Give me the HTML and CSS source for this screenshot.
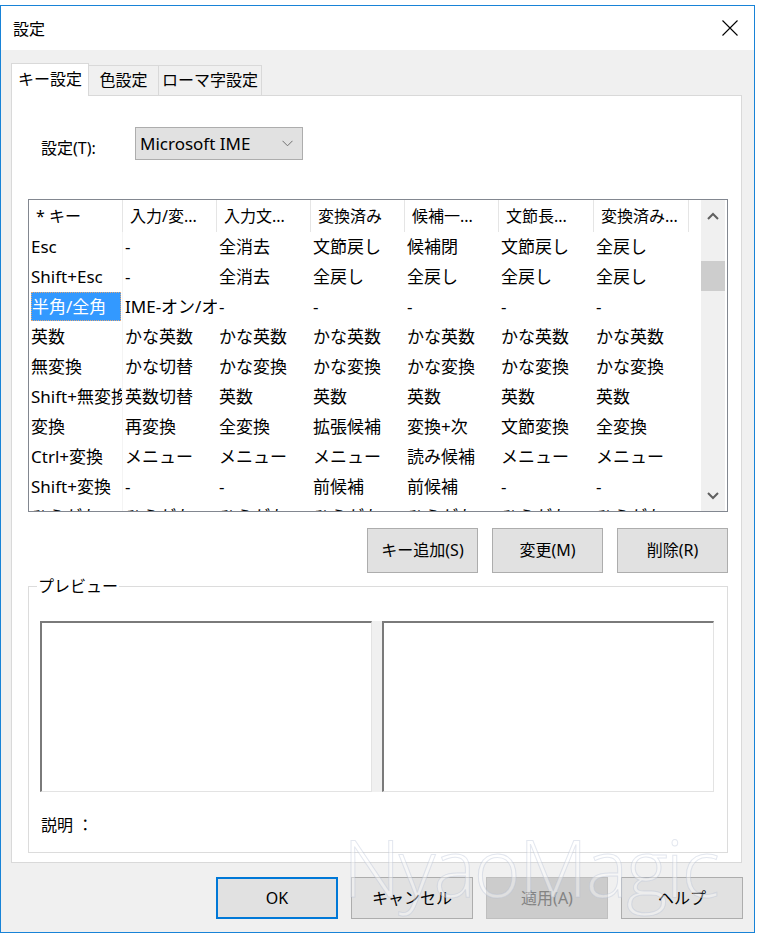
FILE: index.html
```html
<!DOCTYPE html>
<html>
<head>
    <meta charset="utf-8"/>
    <title>設定</title>
    <link rel="stylesheet" href="styles.css">
</head>
<body>
<div class="dialog">
    <div class="titlebar">
        <span class="title">設定</span>
        <svg class="close" width="16" height="16" viewBox="0 0 16 16"><path d="M0.5 0.5 L15.5 15.5 M15.5 0.5 L0.5 15.5" stroke="#000" stroke-width="1.1" fill="none"/></svg>
    </div>
    <div class="client">
        <div class="tabs">
            <div class="tab on">キー設定</div>
            <div class="tab t2">色設定</div>
            <div class="tab t3">ローマ字設定</div>
        </div>
        <div class="panel">
            <div class="setrow">
                <span class="setlabel">設定(T):</span>
                <div class="combo">
                    <span>Microsoft IME</span>
                    <svg width="11" height="7" viewBox="0 0 11 7"><path d="M0.5 0.8 L5.5 5.8 L10.5 0.8" stroke="#707070" stroke-width="1" fill="none"/></svg>
                </div>
            </div>

            <div class="list">
                <div class="grid">
                    <div class="hd">
                        <div class="h">* キー</div>
                        <div class="h">入力/変...</div>
                        <div class="h">入力文...</div>
                        <div class="h">変換済み</div>
                        <div class="h">候補一...</div>
                        <div class="h">文節長...</div>
                        <div class="h">変換済み...</div>
                    </div>
                    <div class="row"><div class="c">Esc</div><div class="c">-</div><div class="c">全消去</div><div class="c">文節戻し</div><div class="c">候補閉</div><div class="c">文節戻し</div><div class="c">全戻し</div></div>
                    <div class="row"><div class="c">Shift+Esc</div><div class="c">-</div><div class="c">全消去</div><div class="c">全戻し</div><div class="c">全戻し</div><div class="c">全戻し</div><div class="c">全戻し</div></div>
                    <div class="row"><div class="c sel"><span>半角/全角</span></div><div class="c">IME-オン/オフ</div><div class="c">-</div><div class="c">-</div><div class="c">-</div><div class="c">-</div><div class="c">-</div></div>
                    <div class="row"><div class="c">英数</div><div class="c">かな英数</div><div class="c">かな英数</div><div class="c">かな英数</div><div class="c">かな英数</div><div class="c">かな英数</div><div class="c">かな英数</div></div>
                    <div class="row"><div class="c">無変換</div><div class="c">かな切替</div><div class="c">かな変換</div><div class="c">かな変換</div><div class="c">かな変換</div><div class="c">かな変換</div><div class="c">かな変換</div></div>
                    <div class="row"><div class="c">Shift+無変換</div><div class="c">英数切替</div><div class="c">英数</div><div class="c">英数</div><div class="c">英数</div><div class="c">英数</div><div class="c">英数</div></div>
                    <div class="row"><div class="c">変換</div><div class="c">再変換</div><div class="c">全変換</div><div class="c">拡張候補</div><div class="c">変換+次</div><div class="c">文節変換</div><div class="c">全変換</div></div>
                    <div class="row"><div class="c">Ctrl+変換</div><div class="c">メニュー</div><div class="c">メニュー</div><div class="c">メニュー</div><div class="c">読み候補</div><div class="c">メニュー</div><div class="c">メニュー</div></div>
                    <div class="row"><div class="c">Shift+変換</div><div class="c">-</div><div class="c">-</div><div class="c">前候補</div><div class="c">前候補</div><div class="c">-</div><div class="c">-</div></div>
                    <div class="row"><div class="c">ひらがな</div><div class="c">ひらがな</div><div class="c">ひらがな</div><div class="c">ひらがな</div><div class="c">ひらがな</div><div class="c">ひらがな</div><div class="c">ひらがな</div></div>
                </div>
                <div class="vscroll">
                    <div class="arrow up"><svg width="12" height="8" viewBox="0 0 12 8"><path d="M1 7 L6 2 L11 7" stroke="#606060" stroke-width="2" fill="none"/></svg></div>
                    <div class="thumb"></div>
                    <div class="arrow down"><svg width="12" height="8" viewBox="0 0 12 8"><path d="M1 1 L6 6 L11 1" stroke="#606060" stroke-width="2" fill="none"/></svg></div>
                </div>
            </div>

            <div class="btnrow">
                <div class="btn">キー追加(S)</div>
                <div class="btn">変更(M)</div>
                <div class="btn">削除(R)</div>
            </div>

            <div class="group">
                <div class="gtitle">プレビュー</div>
                <div class="panes">
                    <div class="pane"></div>
                    <div class="split"></div>
                    <div class="pane"></div>
                </div>
                <div class="desc">説明 ：</div>
            </div>
        </div>

        <div class="footer">
            <div class="fbtn def">OK</div>
            <div class="fbtn">キャンセル</div>
            <div class="fbtn off">適用(A)</div>
            <div class="fbtn">ヘルプ</div>
        </div>
        <div class="mark">NyaoMagic</div>
    </div>
</div>
</body>
</html>
```

FILE: styles.css
```css
* {
    margin: 0;
    padding: 0;
    box-sizing: border-box;
}
body {
    font: 16px/20px "Noto Sans", "Noto Sans CJK JP", sans-serif;
    color: #000;
    background: #fff;
}
.dialog {
    width: 755px;
    height: 928px;
    margin-top: 5px;
    border: 1px solid #1883d7;
    display: flex;
    flex-direction: column;
}
.titlebar {
    height: 44px;
    background: #fff;
    display: flex;
    align-items: center;
    justify-content: space-between;
    padding: 0 16px 0 12px;
}
.title {
    font-size: 16px;
    margin-top: 1px;
}
.close {
    display: block;
    margin-top: -1px;
}
.client {
    flex: 1;
    background: #f0f0f0;
    padding: 13px 0 0 10px;
    position: relative;
}

/* tabs */
.tabs {
    display: flex;
    align-items: flex-end;
    height: 32px;
    position: relative;
    z-index: 2;
}
.tab {
    height: 30px;
    border: 1px solid #d9d9d9;
    border-left: 0;
    border-bottom: 0;
    background: #f0f0f0;
    text-align: center;
    line-height: 29px;
    font-size: 16px;
}
.tab.on {
    height: 33px;
    margin-bottom: -1px;
    width: 78px;
    border-left: 1px solid #d9d9d9;
    background: #fff;
    line-height: 31px;
}
.tab.t2 {
    width: 70px;
}
.tab.t3 {
    width: 103px;
}
.panel {
    width: 731px;
    height: 768px;
    background: #fff;
    border: 1px solid #d9d9d9;
    padding: 0 13px 0 16px;
}

/* setting row */
.setrow {
    display: flex;
    align-items: center;
    margin-top: 31px;
    padding-left: 13px;
}
.setlabel {
    width: 94px;
    font-size: 16px;
    margin-top: 8px;
}
.combo {
    width: 168px;
    height: 33px;
    background: #e1e1e1;
    border: 1px solid #adadad;
    display: flex;
    align-items: center;
    justify-content: space-between;
    padding: 0 9px 0 4px;
    font-size: 17px;
}

/* list view */
.list {
    margin-top: 39px;
    height: 313px;
    border: 1px solid #828790;
    display: flex;
    padding-right: 2px;
    background: #fff;
}
.grid {
    width: 672px;
    overflow: hidden;
    font-size: 17px;
}
.hd {
    display: flex;
    height: 32px;
}
.h {
    width: 94px;
    border-right: 1px solid #e5e5e5;
    padding-left: 7px;
    line-height: 32px;
    white-space: nowrap;
    overflow: hidden;
    font-size: 16px;
}
.h:nth-child(n+6), .c:nth-child(n+6) {
    width: 95px;
}
.row {
    display: flex;
    height: 30px;
    line-height: 30px;
}
.c {
    width: 94px;
    padding: 0 1px 0 2px;
    white-space: nowrap;
    overflow: hidden;
}
.c:first-child {
    border-right: 1px solid #f4f4f4;
}
.c.sel span {
    display: block;
    height: 29px;
    line-height: 29px;
    padding-left: 1px;
    background: #3399ff;
    color: #fff;
    outline: 1px dotted #e0a878;
    outline-offset: -1px;
}
.vscroll {
    width: 24px;
    margin-left: 1px;
    background: #f0f0f0;
    display: flex;
    flex-direction: column;
}
.arrow {
    height: 32px;
    display: flex;
    align-items: center;
    justify-content: center;
}
.arrow.down {
    margin-top: auto;
    height: 30px;
}
.thumb {
    height: 30px;
    margin-top: 29px;
    background: #cdcdcd;
}

/* buttons */
.btnrow {
    display: flex;
    justify-content: flex-end;
    gap: 14px;
    margin-top: 16px;
}
.btn {
    width: 111px;
    height: 45px;
    background: #e1e1e1;
    border: 1px solid #adadad;
    text-align: center;
    line-height: 43px;
    font-size: 16px;
}

/* preview group */
.group {
    margin-top: 13px;
    height: 267px;
    border: 1px solid #dcdcdc;
    padding: 0 13px 0 11px;
}
.gtitle {
    margin: -11px 0 0 -3px;
    width: max-content;
    background: #fff;
    padding: 0 1px;
    font-size: 16px;
}
.panes {
    display: flex;
    margin-top: 25px;
    height: 171px;
}
.pane {
    width: 332px;
    border-top: 2px solid #7a7a7a;
    border-left: 2px solid #7a7a7a;
    border-right: 1px solid #e3e3e3;
    border-bottom: 1px solid #e3e3e3;
    background: #fff;
}
.split {
    width: 10px;
    background: #f0f0f0;
}
.desc {
    margin-top: 23px;
    padding-left: 1px;
    font-size: 16px;
}

/* footer */
.footer {
    display: flex;
    justify-content: flex-end;
    gap: 13px;
    margin-top: 14px;
    padding-right: 11px;
}
.fbtn {
    width: 122px;
    height: 42px;
    background: #e1e1e1;
    border: 1px solid #adadad;
    text-align: center;
    line-height: 40px;
    font-size: 16px;
}
.fbtn.def {
    border: 2px solid #0078d7;
    line-height: 38px;
}
.fbtn.off {
    background: #cccccc;
    border-color: #bfbfbf;
    color: #838383;
}
.mark {
    position: absolute;
    left: 342px;
    top: 776px;
    font: 300 80px/1 "Open Sans", sans-serif;
    letter-spacing: -2px;
    color: rgba(255, 255, 255, 0.4);
    -webkit-text-stroke: 1px rgba(175, 185, 210, 0.35);
    pointer-events: none;
}
```
